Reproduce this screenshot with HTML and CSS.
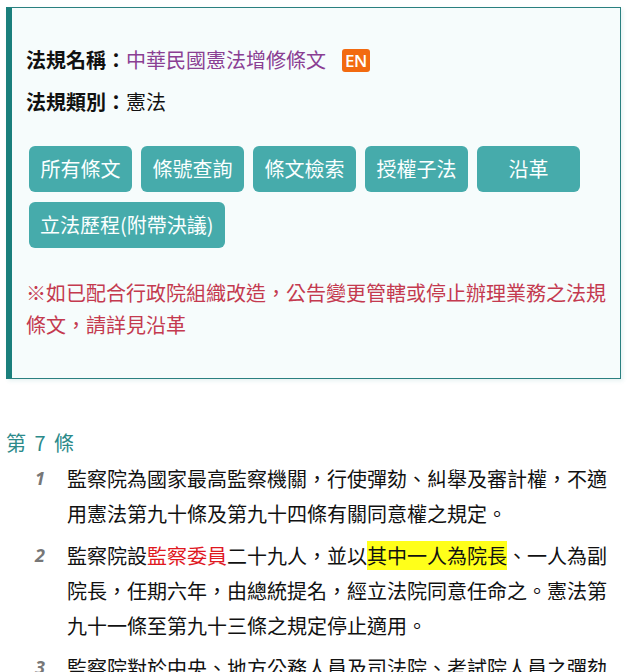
FILE: index.html
```html
<!DOCTYPE html>
<html lang="zh-Hant">
<head>
<meta charset="utf-8">
<title>中華民國憲法增修條文</title>
<link rel="stylesheet" href="styles.css">
</head>
<body>
<div class="page">
  <section class="law-box">
    <div class="law-row">
      <span class="label">法規名稱：</span><a class="law-name" href="#">中華民國憲法增修條文</a><span class="en-badge">EN</span>
    </div>
    <div class="law-row">
      <span class="label">法規類別：</span><span class="law-cat">憲法</span>
    </div>
    <div class="btns">
      <a class="btn" href="#">所有條文</a>
      <a class="btn" href="#">條號查詢</a>
      <a class="btn" href="#">條文檢索</a>
      <a class="btn" href="#">授權子法</a>
      <a class="btn" href="#">沿革</a>
      <a class="btn" href="#">立法歷程(附帶決議)</a>
    </div>
    <p class="note">※如已配合行政院組織改造，公告變更管轄或停止辦理業務之法規條文，請詳見沿革</p>
  </section>

  <h2 class="article-no">第 7 條</h2>
  <ol class="clauses">
    <li class="clause"><span class="num">1</span><span class="text">監察院為國家最高監察機關，行使彈劾、糾舉及審計權，不適用憲法第九十條及第九十四條有關同意權之規定。</span></li>
    <li class="clause"><span class="num">2</span><span class="text">監察院設<span class="red">監察委員</span>二十九人，並以<span class="hl">其中一人為院長</span>、一人為副院長，任期六年，由總統提名，經立法院同意任命之。憲法第九十一條至第九十三條之規定停止適用。</span></li>
    <li class="clause"><span class="num">3</span><span class="text">監察院對於中央、地方公務人員及司法院、考試院人員之彈劾案，須經監察委員二人以上之提議，九人以上之審查及決定，始得提出，不受憲法第九十八條之限制。</span></li>
  </ol>
</div>
</body>
</html>
```

FILE: styles.css
```css
html, body {
  margin: 0;
  padding: 0;
  background: #fff;
}
body {
  font-family: "Noto Sans CJK TC", "Noto Sans", sans-serif;
  color: #111;
  overflow: hidden;
}
.page {
  padding: 7px 0 0 6px;
  width: 615px;
}
.law-box {
  background: #f6fcfc;
  border: 1px solid #2a8080;
  border-left: 6px solid #1a7f7c;
  padding: 31px 14px 37px 14px;
  box-shadow: 2px 2px 4px rgba(60, 150, 150, 0.12);
}
.law-row {
  font-size: 20px;
  line-height: 42px;
  height: 42px;
  display: flex;
  align-items: center;
}
.label {
  font-weight: bold;
  color: #111;
}
.law-name {
  color: #8a3f93;
  text-decoration: none;
}
.law-cat {
  color: #111;
}
.en-badge {
  margin-left: 16px;
  background: #f26a10;
  color: #fff;
  font-family: "Open Sans", "Liberation Sans", sans-serif;
  font-size: 17px;
  font-weight: 600;
  line-height: 23px;
  height: 23px;
  padding: 0 3px;
  border-radius: 3px;
  letter-spacing: -0.5px;
}
.btns {
  margin-top: 23px;
  padding-left: 3px;
  display: flex;
  flex-wrap: wrap;
  column-gap: 9px;
  row-gap: 10px;
}
.btn {
  box-sizing: border-box;
  min-width: 103px;
  height: 46px;
  padding: 0 11px;
  background: #46abab;
  color: #fbffff;
  border-radius: 6px;
  font-size: 20px;
  line-height: 46px;
  text-align: center;
  text-decoration: none;
}
.note {
  margin: 29px 0 0 0;
  color: #c43a4f;
  font-size: 20px;
  line-height: 32px;
}
.article-no {
  margin: 49px 0 0 0;
  font-size: 20px;
  font-weight: normal;
  line-height: 30px;
  color: #2b8a8a;
  letter-spacing: 0;
  word-spacing: 4px;
}
.clauses {
  list-style: none;
  margin: 3px 0 0 0;
  padding: 0;
}
.clause {
  display: grid;
  grid-template-columns: 61px 550px;
  margin-bottom: 7px;
}
.num {
  text-align: right;
  padding-right: 22px;
  font-family: "Open Sans", "Liberation Sans", sans-serif;
  font-style: italic;
  font-weight: bold;
  font-size: 18px;
  line-height: 35px;
  color: #777;
}
.text {
  font-size: 20px;
  line-height: 35px;
  color: #111;
}
.red {
  color: #e0181f;
}
.hl {
  background: #ffff1a;
}
```
